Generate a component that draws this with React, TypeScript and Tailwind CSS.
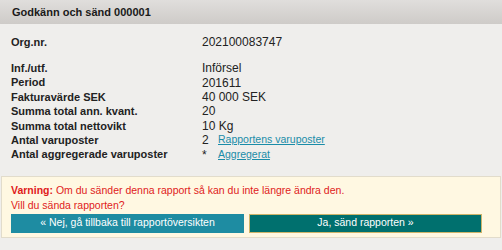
import React from 'react';

const rows: { label: string; value: React.ReactNode }[] = [
  { label: 'Inf./utf.', value: 'Införsel' },
  { label: 'Period', value: '201611' },
  { label: 'Fakturavärde SEK', value: '40 000 SEK' },
  { label: 'Summa total ann. kvant.', value: '20' },
  { label: 'Summa total nettovikt', value: '10 Kg' },
  {
    label: 'Antal varuposter',
    value: (
      <span className="flex items-center">
        <span className="w-[16px]">2</span>
        <a className="text-[#1a8ca8] underline text-[10.5px]">Rapportens varuposter</a>
      </span>
    ),
  },
  {
    label: 'Antal aggregerade varuposter',
    value: (
      <span className="flex items-center">
        <span className="w-[16px]">*</span>
        <a className="text-[#1a8ca8] underline text-[10.5px]">Aggregerat</a>
      </span>
    ),
  },
];

export default function App() {
  return (
    <div className="w-[502px] h-[250px] bg-[#efeeec] text-[11px] text-[#222] font-['Liberation_Sans',sans-serif] overflow-hidden">
      <div className="h-[24px] bg-gradient-to-b from-[#e0dedc] to-[#cecbc8] flex items-center px-[12px] font-bold text-[11px] text-[#1a1a1a]">
        Godkänn och sänd 000001
      </div>

      <div className="px-[11px] pt-[11px]">
        <div className="flex h-[14px] items-center">
          <span className="w-[191px] font-bold">Org.nr.</span>
          <span className="text-[12px]">202100083747</span>
        </div>
        <div className="mt-[12px]">
          {rows.map((r, i) => (
            <div key={i} className="flex h-[14.4px] items-center">
              <span className="w-[191px] font-bold">{r.label}</span>
              <span className="text-[12px]">{r.value}</span>
            </div>
          ))}
        </div>
      </div>

      <div className="mt-[14px] mx-[1px] h-[62px] bg-[#fff8e2] border border-[#e2dccb] px-[9px] pt-[6px]">
        <p className="text-[#e01b1b] text-[10.5px] leading-[15px]">
          <b>Varning:</b> Om du sänder denna rapport så kan du inte längre ändra den.
        </p>
        <p className="text-[#e01b1b] text-[10.5px] leading-[15px]">Vill du sända rapporten?</p>
        <div className="flex gap-[5px] mt-[1px]">
          <button className="w-[233px] h-[19px] bg-[#1e8ca2] text-white text-[10.5px]">
            « Nej, gå tillbaka till rapportöversikten
          </button>
          <button className="w-[233px] h-[19px] bg-[#00706e] border border-[#cdb46a] text-white text-[10.5px]">
            Ja, sänd rapporten »
          </button>
        </div>
      </div>
    </div>
  );
}
